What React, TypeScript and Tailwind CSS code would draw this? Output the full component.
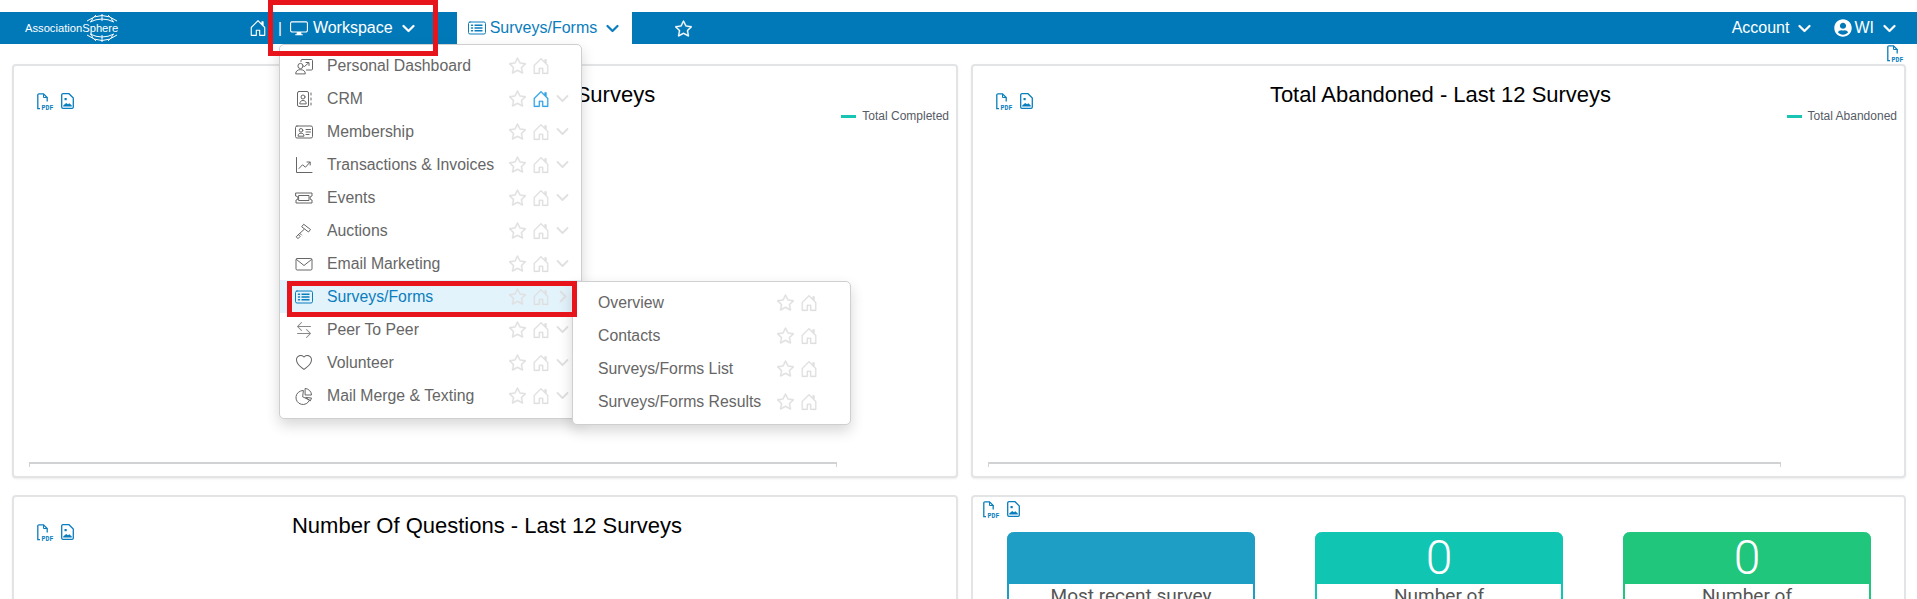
import React from "react";
import { BsHouseDoor, BsDisplay, BsStar, BsArrowLeftRight, BsHeart } from "react-icons/bs";
import { FaUserCircle } from "react-icons/fa";

type IconProps = { className?: string };

const Svg = ({ children, className = "" }: { children: React.ReactNode; className?: string }) => (
  <svg width="18" height="18" viewBox="0 0 18 18" fill="none" stroke="currentColor" strokeWidth="1" strokeLinecap="round" strokeLinejoin="round" className={className}>
    {children}
  </svg>
);

const PersonBoard = () => (
  <Svg>
    <circle cx="5.5" cy="9" r="2.6" />
    <path d="M0.7 16.5c0-2.6 2-3.8 4.8-3.8s4.8 1.200 4.800 3.800z" />
    <path d="M6 4.500V3.500a1 1 0 0 1 1-1h9.500a1 1 0 0 1 1 1v8.500a1 1 0 0 1-1 1h-5" />
    <path d="M9.500 9.500l4-3.500M11 5.500h3v3" />
  </Svg>
);
const Rolodex = () => (
  <Svg>
    <rect x="2.500" y="1.500" width="11" height="15" rx="1.500" />
    <circle cx="8" cy="7" r="2" />
    <path d="M4.800 13.500c0-2 1.400-3 3.200-3s3.200 1 3.200 3z" />
    <path d="M16 3v2M16 8v2M16 13v2" />
  </Svg>
);
const Vcard = () => (
  <Svg>
    <rect x="0.500" y="3" width="17" height="12" rx="1.500" />
    <circle cx="6" cy="7.300" r="1.800" />
    <path d="M3 12.800c0-1.800 1.300-2.600 3-2.600s3 .8 3 2.600z" />
    <path d="M11 6.500h4.500M11 9h4.500M11 11.500h3" />
  </Svg>
);
const Graph = () => (
  <Svg>
    <path d="M1.500 1.500V16.500H17" />
    <path d="M4 12.500l3.500-3.700 3 2.400 4.500-5M12 6h3.200v3" />
  </Svg>
);
const Ticket = () => (
  <Svg>
    <path d="M1 4h16v3a2 2 0 0 0 0 4v3H1v-3a2 2 0 0 0 0-4z" />
    <rect x="4" y="6.500" width="10" height="5" />
  </Svg>
);
const Gavel = () => (
  <Svg>
    <path d="M9 2.500l6.500 5-2 2.500L7 5z" />
    <path d="M9 7.500L3 13M5 11.500l1.500 1.500M1.500 14.500l2-1.800 1.700 1.700-2 2z" />
  </Svg>
);
const Envelope = () => (
  <Svg>
    <rect x="1" y="3.500" width="16" height="11.500" rx="1.200" />
    <path d="M1.500 4.500L9 10.500l7.500-6" />
  </Svg>
);
const ListCard = ({ className = "" }: IconProps) => (
  <Svg className={className}>
    <rect x="0.500" y="3" width="17" height="12" rx="1.500" />
    <path d="M3.500 6.200h1M3.500 9h1M3.500 11.800h1" strokeWidth="1.500" />
    <path d="M6.500 6.200h8M6.500 9h8M6.500 11.800h8" strokeWidth="1.500" strokeLinecap="butt" />
  </Svg>
);
const Pie = () => (
  <Svg>
    <path d="M8 3.500a7 7 0 1 0 6.500 9.500L8 10z" />
    <path d="M10.500 1.500a6.500 6.500 0 0 1 6 6.500h-6z" />
    <path d="M11 10.500l5.500 0.500-1 2.500z" />
  </Svg>
);
const Arrows = () => <BsArrowLeftRight size={16} className="text-[#888]" />;
const Heart = () => <BsHeart size={16} />;

const Chevron = ({ className = "", right = false, width = 2.200 }: { className?: string; right?: boolean; width?: number }) => (
  <svg width="13" height="13" viewBox="0 0 13 13" fill="none" stroke="currentColor" strokeWidth={width} strokeLinecap="round" strokeLinejoin="round" className={className}>
    <path d={right ? "M4.500 1.500L9.500 6.500L4.500 11.500" : "M1.500 4L6.500 9L11.500 4"} />
  </svg>
);

const Pdf = ({ className = "" }: IconProps) => (
  <svg width="17" height="17" viewBox="0 0 17 17" fill="none" className={className}>
    <path d="M1 15.500H0.800V2a1.200 1.200 0 0 1 1.200-1.200H6.500l3.700 3.700v4" stroke="currentColor" strokeWidth="1.300" />
    <path d="M6.500 1v3.500h3.700" stroke="currentColor" strokeWidth="1" />
    <path d="M1 15.700h2" stroke="currentColor" strokeWidth="1.300" />
    <text x="4.500" y="16.500" fontSize="6.500" fontWeight="700" fontFamily="'Liberation Mono', monospace" fill="currentColor" textLength="12">PDF</text>
  </svg>
);
const ImageFile = ({ className = "" }: IconProps) => (
  <svg width="13" height="16" viewBox="0 0 13 16" fill="none" className={className}>
    <path d="M2 .7h6l4.300 4.300v9a1.300 1.300 0 0 1-1.300 1.300H2A1.300 1.300 0 0 1 .7 14V2A1.300 1.300 0 0 1 2 .7z" stroke="currentColor" strokeWidth="1.300" />
    <rect x="3.500" y="5" width="2.200" height="2.200" fill="currentColor" />
    <path d="M2.200 13.500v-1l3-2.500 1.800 1.200 1.300-1 2.500 2.300v1z" fill="currentColor" />
  </svg>
);

const menu = [
  { label: "Personal Dashboard", Icon: PersonBoard, chevron: false },
  { label: "CRM", Icon: Rolodex, chevron: true, home: true },
  { label: "Membership", Icon: Vcard, chevron: true },
  { label: "Transactions & Invoices", Icon: Graph, chevron: true },
  { label: "Events", Icon: Ticket, chevron: true },
  { label: "Auctions", Icon: Gavel, chevron: true },
  { label: "Email Marketing", Icon: Envelope, chevron: true },
  { label: "Surveys/Forms", Icon: ListCard, chevron: true, active: true },
  { label: "Peer To Peer", Icon: Arrows, chevron: true },
  { label: "Volunteer", Icon: Heart, chevron: true },
  { label: "Mail Merge & Texting", Icon: Pie, chevron: true },
];

const sub = ["Overview", "Contacts", "Surveys/Forms List", "Surveys/Forms Results"];

function Logo() {
  return (
    <div className="relative flex h-[32px] w-[120px] shrink-0 items-center">
      <svg className="absolute left-[83px] top-[2px]" width="38" height="28" viewBox="0 0 38 28" fill="none" stroke="white" strokeWidth="1">
        <path d="M4 7 Q19 -4 34 7" />
        <path d="M7 8 Q19 2 31 8" />
        <path d="M4 21 Q19 32 34 21" />
        <path d="M7 20 Q19 26 31 20" />
        <path d="M13 1 Q9 4 8 8 M25 1 Q29 4 30 8 M19 0 V7 M13 27 Q9 24 8 20 M25 27 Q29 24 30 20 M19 21 V28" />
      </svg>
      <span className="relative ml-[25px] whitespace-nowrap text-[11.200px] text-white">AssociationSphere</span>
    </div>
  );
}

function ExportIcons({ className = "" }: { className?: string }) {
  return (
    <div className={`flex items-start gap-[7px] text-[#0a7dbd] ${className}`}>
      <Pdf />
      <ImageFile />
    </div>
  );
}

function ChartPanel({ title, legend, axisWidth }: { title: string; legend?: string; axisWidth?: string }) {
  return (
    <section className="flex h-[414px] flex-col rounded-[4px] border-2 border-[#e2e4e6] bg-white shadow-[0_1px_2px_rgba(0,0,0,0.08)]">
      <div className="grid grid-cols-[1fr_auto_1fr] pl-[23px] pr-[19px] pt-[15px]">
        <ExportIcons className="mt-[12px]" />
        <h2 className="text-[22px] leading-[28px] text-black">{title}</h2>
        <div />
      </div>
      {legend && (
        <div className="-mt-[1px] flex items-center justify-end gap-[6px] pr-[7px] text-[12px] leading-[14px] text-[#555b66]">
          <span className="h-[3px] w-[15px] bg-[#17c5b2]" />
          {legend}
        </div>
      )}
      <div className="flex-1" />
      {axisWidth && (
        <div className={`mb-[9px] ml-[15px] h-[5px] border-l border-r border-t-2 border-[#d0d2d4] ${axisWidth}`} />
      )}
    </section>
  );
}

function StatCard({ color, border, value, label }: { color: string; border: string; value: string; label: string }) {
  return (
    <div className={`w-[248px] rounded-t-[7px] border-x-2 ${border}`}>
      <div className={`-mx-[2px] flex h-[52px] items-center justify-center rounded-t-[7px] ${color} font-['Roboto',sans-serif] text-[48px] font-light leading-none text-white`}>
        {value}
      </div>
      <div className="text-center font-['Roboto',sans-serif] text-[19px] leading-[24px] text-[#555]">{label}</div>
    </div>
  );
}

function RowIcons({ home, chevron, active }: { home?: boolean; chevron?: boolean; active?: boolean }) {
  return (
    <div className="ml-auto flex items-center">
      <BsStar size={17} stroke="currentColor" strokeWidth={0.4} className="text-[#e0e0e0]" />
      <BsHouseDoor size={18} stroke="currentColor" strokeWidth={0.2} className={`ml-[6px] ${home ? "text-[#35a6e6]" : "text-[#e0e0e0]"}`} />
      <span className="ml-[6px] w-[13px]">
        {chevron && <Chevron right={active} width={1.800} className="text-[#e0e0e0]" />}
      </span>
    </div>
  );
}

export default function App() {
  return (
    <div className="h-[599px] w-[1917px] overflow-hidden bg-white pt-[12px] font-['Liberation_Sans',Arial,sans-serif]">
      <nav className="relative flex h-[32px] items-center bg-[#0179b8] text-white">
        <Logo />
        <div className="ml-[129px] flex items-center">
          <BsHouseDoor size={18} />
          <span className="ml-[11px] text-[15px]">|</span>
          <BsDisplay size={18} className="ml-[8px]" />
          <span className="ml-[5px] text-[16px]">Workspace</span>
          <Chevron className="ml-[9px]" />
        </div>
        <div className="ml-[42px] flex h-full w-[175px] items-center bg-white pl-[11px] text-[#0a7dbd]">
          <ListCard />
          <span className="ml-[4px] text-[16px]">Surveys/Forms</span>
          <Chevron className="ml-[9px]" />
        </div>
        <BsStar size={17} stroke="currentColor" strokeWidth={0.3} className="ml-[43px]" />
        <div className="ml-auto flex items-center pr-[21px]">
          <span className="text-[16px]">Account</span>
          <Chevron className="ml-[9px]" />
          <FaUserCircle size={18} className="ml-[23px]" />
          <span className="ml-[2px] text-[16px]">WI</span>
          <Chevron className="ml-[9px]" />
        </div>

        {/* Workspace dropdown */}
        <div className="absolute left-[279px] top-[32px] z-20 w-[303px] rounded-[5px] border border-[#cfcfcf] bg-white pb-[6px] pt-[4px] text-[15.800px] text-[#666] shadow-[0_6px_14px_rgba(0,0,0,0.16)]">
          {menu.map(({ label, Icon, chevron, home, active }) => (
            <div key={label} className={`flex h-[33px] items-center pl-[15px] pr-[12px] ${active ? "bg-[#e3f3fb] text-[#0a7dbd]" : ""}`}>
              <span className="flex w-[18px] justify-center"><Icon /></span>
              <span className="ml-[14px] whitespace-nowrap">{label}</span>
              <RowIcons home={home} chevron={chevron} active={active} />
            </div>
          ))}
        </div>

        {/* Surveys/Forms submenu */}
        <div className="absolute left-[572px] top-[269px] z-30 w-[279px] rounded-[5px] border border-[#cfcfcf] bg-white pb-[6px] pt-[4px] text-[15.800px] text-[#666] shadow-[0_6px_14px_rgba(0,0,0,0.16)]">
          {sub.map((label) => (
            <div key={label} className="flex h-[33px] items-center pl-[25px] pr-[13px]">
              <span className="whitespace-nowrap">{label}</span>
              <RowIcons />
            </div>
          ))}
        </div>

        {/* Annotation boxes */}
        <div className="absolute left-[268px] -top-[12px] z-40 h-[56px] w-[170px] border-[5px] border-[#e8141c]" />
        <div className="absolute left-[287px] top-[269px] z-40 h-[36px] w-[290px] border-[5px] border-[#e8141c]" />
      </nav>

      <div className="flex h-[20px] justify-end pr-[13px] text-[#0a7dbd]">
        <Pdf className="mt-[1px]" />
      </div>

      <main className="grid grid-cols-[946px_935px] gap-x-[13px] gap-y-[17px] pl-[12px]">
        <ChartPanel title="Total Completed - Last 12 Surveys" legend="Total Completed" axisWidth="w-[808px]" />
        <ChartPanel title="Total Abandoned - Last 12 Surveys" legend="Total Abandoned" axisWidth="w-[793px]" />
        <ChartPanel title="Number Of Questions - Last 12 Surveys" />
        <section className="h-[414px] rounded-[4px] border-2 border-[#e2e4e6] bg-white">
          <ExportIcons className="ml-[10px] mt-[4px]" />
          <div className="mt-[14px] flex gap-[60px] pl-[34px]">
            <StatCard color="bg-[#1f9ec5]" border="border-[#1f9ec5]" value="" label="Most recent survey" />
            <StatCard color="bg-[#10c6b2]" border="border-[#10c6b2]" value="0" label="Number of" />
            <StatCard color="bg-[#1fc67c]" border="border-[#1fc67c]" value="0" label="Number of" />
          </div>
        </section>
      </main>
    </div>
  );
}
